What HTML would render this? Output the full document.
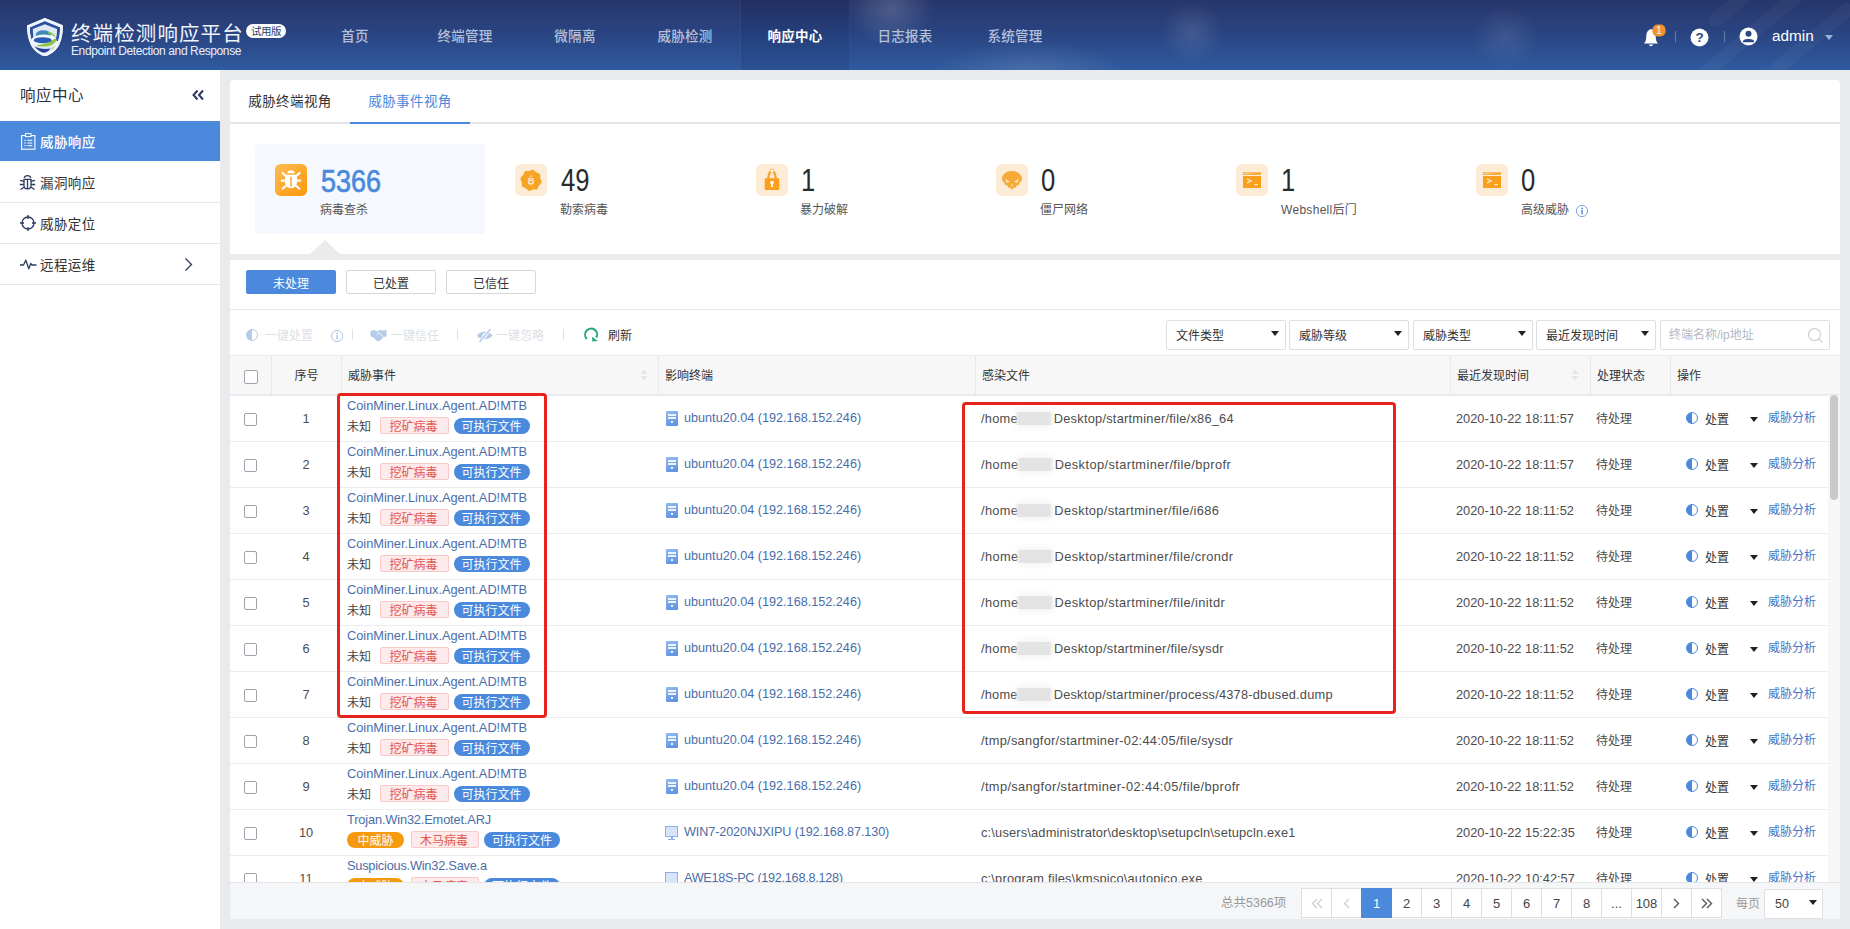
<!DOCTYPE html>
<html lang="zh-CN">
<head>
<meta charset="utf-8">
<title>终端检测响应平台</title>
<style>
*{box-sizing:border-box;margin:0;padding:0}
html,body{width:1850px;height:929px;overflow:hidden}
body{position:relative;background:#e8eaed;font-family:"Liberation Sans","Noto Sans CJK SC",sans-serif;font-size:12px;color:#333}
i{font-style:normal;display:inline-block}
.abs{position:absolute}
/* ---------- header ---------- */
#hd{position:absolute;left:0;top:0;width:1850px;height:70px;background:linear-gradient(180deg,#27366b 0%,#2a4583 50%,#2f5ba0 100%);overflow:hidden}
#hd .glow{position:absolute;border-radius:50%;background:radial-gradient(ellipse at center,rgba(255,255,255,.17),rgba(255,255,255,0) 68%)}
#hd .streak{position:absolute;height:14px;border-radius:7px;background:rgba(255,255,255,.035);transform-origin:left center;transform:rotate(-40deg)}
#logo{position:absolute;left:27.300px;top:17.800px;width:36px;height:38.500px}
#ttl{position:absolute;left:71px;top:18px;font-size:20.500px;line-height:28px;color:#f0f4fb;letter-spacing:1.100px;white-space:nowrap;font-family:"Noto Sans CJK SC",sans-serif;font-weight:400}
#sub{position:absolute;left:71px;top:44px;font-size:12px;line-height:14px;color:#e9eef8;white-space:nowrap;letter-spacing:-.39px}
#trial{position:absolute;left:246px;top:24px;width:40px;height:14px;border-radius:7px;background:#fff;color:#2c3e63;font-size:10.5px;line-height:14px;text-align:center;letter-spacing:-.5px;font-family:"Noto Sans CJK SC",sans-serif}
.nav{position:absolute;top:0;height:70px;width:110px;text-align:center;line-height:71px;font-size:13.500px;color:#b5c0d8;font-weight:500;font-family:"Noto Sans CJK SC",sans-serif;letter-spacing:.3px}
.nav.on{background:linear-gradient(180deg,#222f60 0%,#25407c 50%,#2a5194 100%);color:#fff;font-weight:700;border-left:1px solid rgba(255,255,255,.06);border-right:1px solid rgba(255,255,255,.06)}
.vsep{position:absolute;top:31px;width:1px;height:11px;background:rgba(255,255,255,.28)}
#admin{position:absolute;left:1772px;top:26px;font-size:15.300px;line-height:20px;color:#fff}
#acar{position:absolute;left:1825px;top:35px;width:0;height:0;border-left:4px solid transparent;border-right:4px solid transparent;border-top:5px solid #9fb3d9}
/* ---------- sidebar ---------- */
#sb{position:absolute;left:0;top:70px;width:220px;height:859px;background:#fff}
#sbt{position:absolute;left:20px;top:12px;letter-spacing:.5px;font-size:15.500px;line-height:24px;color:#2b3140;font-family:"Noto Sans CJK SC",sans-serif;font-weight:400}
.mi{position:absolute;left:0;width:220px;height:41px;border-bottom:1px solid #e3e6ea;font-size:13.500px;line-height:41px;color:#333;padding-left:40px;font-family:"Noto Sans CJK SC",sans-serif;letter-spacing:.4px}
.mi.on{background:#4a89dc;color:#fff;border-bottom:none;height:40px;font-weight:500}
.mi svg{position:absolute;left:20px;top:13px}
/* ---------- panel 1 ---------- */
#p1{position:absolute;left:230px;top:80px;width:1610px;height:174px;background:#fff;border-radius:3px 3px 0 0}
#tabs{position:absolute;left:0;top:0;width:1610px;height:44px;border-bottom:2px solid #e3e4e6}
.tab{position:absolute;top:0;height:44px;line-height:40px;font-size:13.500px;color:#333;font-family:"Noto Sans CJK SC",sans-serif;letter-spacing:.4px;text-align:center}
.tab.on{color:#4a89dc;border-bottom:2px solid #4a89dc}
#card{position:absolute;left:25px;top:64px;width:230px;height:90px;background:#f5f8fd;border-radius:4px}
.st-ic{position:absolute;width:32px;height:32px;border-radius:5px;top:84px}
.st-n{position:absolute;top:83px;font-size:32px;line-height:34px;color:#2a2a2a;transform-origin:left center;transform:scaleX(.8);white-space:nowrap}
.st-l{position:absolute;top:122px;font-size:12px;line-height:16px;color:#555;white-space:nowrap;font-family:"Liberation Sans","Noto Sans CJK SC",sans-serif}
#tri{position:absolute;left:80px;top:160px;width:0;height:0;border-left:15px solid transparent;border-right:15px solid transparent;border-bottom:14px solid #ebebeb}
#gap{position:absolute;left:230px;top:254px;width:1610px;height:6px;background:#ebebeb}
/* ---------- panel 2 ---------- */
#p2{position:absolute;left:230px;top:260px;width:1610px;height:659px;background:#fff;overflow:hidden}
.btn{position:absolute;top:10px;width:90px;height:24px;border:1px solid #d4d7dc;border-radius:2px;background:#fff;color:#333;font-size:12px;line-height:23px;text-align:center;font-family:"Noto Sans CJK SC",sans-serif}
.btn.on{background:#4a89dc;border-color:#4a89dc;color:#fff}
#bline{position:absolute;left:0;top:49px;width:1610px;height:1px;background:#e3e5e8}
.tb{position:absolute;top:66px;font-size:12px;line-height:18px;color:#dcdfe6;white-space:nowrap;font-family:"Noto Sans CJK SC",sans-serif}
.tsep{position:absolute;top:69px;width:1px;height:11px;background:#dddfe3}
.sel{position:absolute;top:60px;width:120px;height:30px;border:1px solid #dcdfe3;border-radius:2px;background:#fff;font-size:12px;line-height:28px;padding-left:9px;color:#333;font-family:"Noto Sans CJK SC",sans-serif}
.sel:after{content:"";position:absolute;right:6px;top:10px;border-left:4px solid transparent;border-right:4px solid transparent;border-top:5px solid #222}
#srch{position:absolute;left:1430px;top:60px;width:170px;height:30px;border:1px solid #dcdfe3;border-radius:2px;background:#fff;font-size:12px;line-height:28px;padding-left:8px;color:#b4b8bf;font-family:"Liberation Sans","Noto Sans CJK SC",sans-serif}
/* table */
#th{position:absolute;left:0;top:95px;width:1610px;height:40px;background:#f7f7f8;border-top:1px solid #e8eaed;border-bottom:1px solid #e8eaed}
#th div{position:absolute;top:0;height:38px;line-height:38px;font-size:12px;color:#333;border-left:1px solid #e6e8eb;padding-left:6px;font-family:"Noto Sans CJK SC",sans-serif}
#tbody{position:absolute;left:0;top:135px;width:1598px;height:487px;overflow:hidden}
.tr{position:relative;width:1598px;height:46px;background:linear-gradient(#ebecee,#ebecee) no-repeat 0 0/100% 1px}
.c{position:absolute;top:0;height:46px;line-height:47px;font-size:12.8px;white-space:nowrap;color:#4c4c4c}
.c0{left:0;width:41px}
.c1{left:41px;width:70px;text-align:center}
.c2{left:117px}
.c3{left:435px;color:#4a6ea9;font-size:12.650px}
.c4{left:751px;letter-spacing:.24px}
.c5{left:1226px;letter-spacing:0}
.c6{left:1366px;font-family:"Noto Sans CJK SC",sans-serif;font-size:12px;line-height:45px}
.c7{left:1440px;width:158px;font-family:"Noto Sans CJK SC",sans-serif;font-size:12px}
.cb{position:absolute;left:14px;top:18px;width:13px;height:13px;border:1px solid #9ea3ab;border-radius:2px;background:#fff}
.nm{position:absolute;left:0;top:2px;line-height:17px;color:#4a6ea9;font-size:12.8px;letter-spacing:-.02px}
.tg{position:absolute;left:0;top:22px;height:18px;line-height:17px;font-size:12px;font-family:"Noto Sans CJK SC",sans-serif}
.tg span{display:inline-block;vertical-align:top;height:17px}
.unk{width:33px;color:#444}
.mid{width:57px;margin-right:6.500px;border-radius:9px;background:#f59a0c;color:#fff;text-align:center;height:16px!important;line-height:16px;margin-top:1px}
.pk{width:68.500px;border:1px solid #f9c9c9;background:#fdeaea;color:#e25850;text-align:left;padding-left:8.500px;line-height:15px;border-radius:2px;margin-right:5px}
.bl{width:76px;border-radius:9px;background:#4a89dc;color:#fff;text-align:center;height:16px!important;line-height:16px;margin-top:1px}
.hn{position:absolute;left:19px;top:0}
.blur{width:40px;height:13px;vertical-align:middle;margin:0 0 0 -4px;border-radius:4px;background:linear-gradient(90deg,rgba(227,227,227,0) 0,#e3e3e3 5px,#e3e3e3 35px,rgba(227,227,227,0) 40px);position:relative;top:-1px;box-shadow:0 -5px 6px -3px rgba(240,240,240,.9),0 5px 6px -3px rgba(240,240,240,.9)}
.half{position:absolute;left:16px;top:17px;width:12px;height:12px;border-radius:50%;border:1px solid #4a89dc;background:linear-gradient(90deg,#4a89dc 50%,#fff 50%)}
.cz{position:absolute;left:35px;top:0;color:#333}
.car{position:absolute;left:80px;top:22px;width:0;height:0;border-left:4px solid transparent;border-right:4px solid transparent;border-top:5px solid #222}
.fx{position:absolute;left:98px;top:-2px;color:#3f78c9}
.ic-linux,.ic-win{position:absolute;left:1px;top:16px;width:12px;height:15px}
.ic-linux{background:linear-gradient(160deg,#93baf0 0%,#5a8fe0 100%);border-radius:1px}
.ic-linux:before{content:"";position:absolute;left:2px;top:3px;width:8px;height:1.500px;background:#eef4fd;box-shadow:0 3px 0 #eef4fd}
.ic-linux:after{content:"";position:absolute;left:5px;top:10px;width:2px;height:1.500px;background:#eef4fd}
.ic-win{left:0;height:11px;top:17px;width:13px;border:1px solid #8eafe3;border-bottom-width:1.500px;background:#d6e5f9}
.ic-win:before{content:"";position:absolute;left:5px;top:9.500px;width:1.500px;height:2px;background:#8eafe3}
.ic-win:after{content:"";position:absolute;left:2px;top:11.500px;width:7px;height:1px;background:#8eafe3}
/* annotation boxes */
.red{position:absolute;border:3px solid #e8231c;border-radius:4px;pointer-events:none}
/* scrollbar */
#sbar{position:absolute;left:1598px;top:135px;width:12px;height:487px;background:#f7f7f7}
#sbar i{position:absolute;left:2px;top:0;width:8px;height:105px;border-radius:4px;background:#c9c9c9}
/* pager */
#pg{position:absolute;left:0;top:622px;width:1610px;height:37px;background:#f5f6f8;border-top:1px solid #e3e5e8}
.pn{position:absolute;top:5px;width:31px;height:30px;border:1px solid #dcdfe3;background:#fff;text-align:center;line-height:29px;font-size:13px;color:#444}
.pn.on{background:#4a89dc;border-color:#4a89dc;color:#fff;z-index:2}
</style>
</head>
<body>
<!-- ================= HEADER ================= -->
<div id="hd">
  <div class="glow" style="left:846px;top:-32px;width:90px;height:80px"></div><div class="glow" style="left:1160px;top:0px;width:64px;height:64px;opacity:.7"></div><div class="glow" style="left:1470px;top:4px;width:70px;height:66px;opacity:.55"></div><div class="glow" style="left:930px;top:40px;width:200px;height:60px;opacity:.7"></div>
  <div class="streak" style="left:1710px;top:18px;width:80px"></div>
  <div class="streak" style="left:1700px;top:70px;width:150px"></div>
  <div class="streak" style="left:1760px;top:76px;width:120px"></div>
  <svg id="logo" viewBox="0 0 36 38.500">
    <path d="M17.900 0 L35.800 7.300 C36 14 35 20 32.500 26 C29.500 32.500 24 36.500 17.900 38.400 C12 36.500 6.500 32.500 3.500 26 C1 20 0 14 .100 7.500 Z" fill="#eaf2fc"/>
    <path d="M17.900 3 L33 9.200 C33.200 14.500 32.500 19 31 23 L5 23 C3.300 19 2.700 14.500 2.900 9.300 Z" fill="#2b50a2"/>
    <path d="M17.900 6.200 L30 11 C30.200 16 29.500 20 28 24 C26 30 22.500 33.500 17.900 35.600 C13.500 33.500 10 30 8 24 C6.300 20 5.800 16 5.900 11 Z" fill="#dfeaf7"/>
    <ellipse cx="16.300" cy="16.700" rx="7.500" ry="4.400" fill="#3f8ab6"/>
    <path d="M22 13.500 C25.500 14.500 28 17 28.800 20 C26.500 17.500 24 16.200 21 15.600 Z" fill="#8cc63f"/>
    <ellipse cx="16.800" cy="22.400" rx="12.600" ry="6" fill="#f3f8fe"/>
    <path d="M29 20.500 C30.500 25 24 28.600 16 28.600 C13 28.600 11 28.200 9.500 27.500 C12 26.500 20 26.500 24.500 22.800 C26 21.600 27.500 20.500 29 20.500 Z" fill="#8cc63f"/>
    <ellipse cx="15.700" cy="22.200" rx="9" ry="3" fill="#2a5bb4"/>
    <path d="M7 28 C11 31 19 31.300 23.500 30.500 C22 33 19.500 34.500 17 34.800 C12.500 34 8.500 31.500 7 28 Z" fill="#22409b"/>
    <path d="M24.500 30 C26 29.500 27.500 28.500 28.300 27.500 C27.800 30 26 32 24 33 Z" fill="#b9dc8a"/>
    <path d="M17.900 0 L35.800 7.300 C36 14 35 20 32.500 26 C29.500 32.500 24 36.500 17.900 38.400 C12 36.500 6.500 32.500 3.500 26 C1 20 0 14 .100 7.500 Z M17.900 3 L2.900 9.300 C2.700 15 3.500 20 5.800 25.500 C8.500 31 13 34.200 17.900 35.800 C23 34.200 27.500 31 30.200 25.500 C32.500 20 33.200 15 33 9.200 Z" fill="#eef4fc" fill-rule="evenodd"/>
  </svg>
  <div id="ttl">终端检测响应平台</div>
  <div id="sub">Endpoint Detection and Response</div>
  <div id="trial">试用版</div>
  <div class="nav" style="left:300px">首页</div>
  <div class="nav" style="left:410px">终端管理</div>
  <div class="nav" style="left:520px">微隔离</div>
  <div class="nav" style="left:630px">威胁检测</div>
  <div class="nav on" style="left:740px">响应中心</div>
  <div class="nav" style="left:850px">日志报表</div>
  <div class="nav" style="left:960px">系统管理</div>
  <!-- bell -->
  <svg class="abs" style="left:1640px;top:23px" width="28" height="28" viewBox="0 0 28 28">
    <path d="M11 6 C7.300 7 6.300 10.500 6.300 13.500 C6.300 17.500 5.300 19 3.800 20.600 L18.200 20.600 C16.700 19 15.700 17.500 15.700 13.500 C15.700 10.500 14.700 7 11 6 Z" fill="#fff"/>
    <path d="M8.800 21.600 A2.300 2.300 0 0 0 13.200 21.600 Z" fill="#fff"/>
    <rect x="12.500" y="1.500" width="13" height="12" rx="5" fill="#f0932b"/>
    <text x="19" y="11.300" font-size="10.500" fill="#fff" text-anchor="middle" font-family="Liberation Sans, sans-serif">1</text>
  </svg>
  <div class="vsep" style="left:1675px"></div>
  <!-- help -->
  <svg class="abs" style="left:1690px;top:28px" width="19" height="19" viewBox="0 0 19 19">
    <circle cx="9.500" cy="9.500" r="9" fill="#fff"/>
    <text x="9.500" y="14.300" font-size="13.500" font-weight="700" fill="#2a4986" text-anchor="middle" font-family="Liberation Sans, sans-serif">?</text>
  </svg>
  <div class="vsep" style="left:1724px"></div>
  <!-- user -->
  <svg class="abs" style="left:1739px;top:27px" width="19" height="19" viewBox="0 0 19 19">
    <circle cx="9.500" cy="9.500" r="9" fill="#fff"/>
    <circle cx="9.500" cy="6.800" r="3" fill="#2a4986"/>
    <path d="M4 14.500 C4 11.300 15 11.300 15 14.500 L15 15.200 L4 15.200 Z" fill="#2a4986"/>
  </svg>
  <div id="admin">admin</div>
  <div id="acar"></div>
</div>

<!-- ================= SIDEBAR ================= -->
<div id="sb">
  <div id="sbt">响应中心</div>
  <svg class="abs" style="left:192px;top:19px" width="13" height="12" viewBox="0 0 13 12"><path d="M5.500 1.500 L1.500 6 L5.500 10.500 M11 1.500 L7 6 L11 10.500" fill="none" stroke="#2c3a5c" stroke-width="2"/></svg>
  <div class="mi on" style="top:51px">
    <svg style="left:21px;top:12px" width="15" height="17" viewBox="0 0 15 17"><rect x=".6" y="2.600" width="13.300" height="13.600" fill="none" stroke="#fff" stroke-width="1.100"/><rect x="4.500" y=".6" width="5.500" height="3" fill="#4a89dc" stroke="#fff" stroke-width="1"/><path d="M3.300 7.300H4.800M6.300 7.300H11.300M3.300 10H4.800M6.300 10H11.300M3.300 12.700H4.800M6.300 12.700H11.300" stroke="#fff" stroke-width="1"/></svg>威胁响应</div>
  <div class="mi" style="top:92px">
    <svg style="left:19px;top:12px" width="17" height="17" viewBox="0 0 17 17"><path d="M5.300 3.800 C5.800 .8 11.200 .8 11.700 3.800 M4.300 5.300 H12.700 M5 5.300 V11.500 C5 16 12 16 12 11.500 V5.300 M8.500 5.300 V14.800 M1 6.300 L4.800 7.300 M16 6.300 L12.200 7.300 M.8 10.500 H5 M12 10.500 H16.200 M1.500 15.500 L5.300 13 M15.500 15.500 L11.700 13" fill="none" stroke="#2c3a5c" stroke-width="1.300"/></svg>漏洞响应</div>
  <div class="mi" style="top:133px">
    <svg style="left:20px;top:12px" width="16" height="16" viewBox="0 0 16 16"><circle cx="8" cy="8" r="6" fill="none" stroke="#2c3a5c" stroke-width="1.300"/><path d="M8 0V4M8 12V16M0 8H4M12 8H16" stroke="#2c3a5c" stroke-width="1.300"/></svg>威胁定位</div>
  <div class="mi" style="top:174px">
    <svg style="left:20px;top:12px" width="17" height="16" viewBox="0 0 17 16"><path d="M0 9 H3.500 L5.800 4.200 L8.800 12.800 L10.800 7.500 L12 9 H16.500" fill="none" stroke="#2c3a5c" stroke-width="1.300" stroke-linejoin="round"/></svg>远程运维
    <svg style="left:184px;top:13px" width="9" height="15" viewBox="0 0 9 15"><path d="M1.500 1.500 L7.500 7.500 L1.500 13.500" fill="none" stroke="#2c3a5c" stroke-width="1.300"/></svg></div>
</div>

<!-- ================= PANEL 1 ================= -->
<div id="p1">
  <div id="tabs">
    <div class="tab" style="left:0;width:120px">威胁终端视角</div>
    <div class="tab on" style="left:120px;width:120px">威胁事件视角</div>
  </div>
  <div id="card"></div>
  <svg class="st-ic" style="left:45px" viewBox="0 0 32 32"><defs><linearGradient id="og" x1="0" y1="0" x2="1" y2="1"><stop offset="0" stop-color="#fdbb55"/><stop offset="1" stop-color="#ff970a"/></linearGradient></defs><rect width="32" height="32" rx="5.500" fill="url(#og)"/><g transform="translate(16 16.300) scale(1.120) translate(-16 -17)"><path d="M12.600 10.600 A3.500 3.500 0 0 1 19.400 10.600 Z" fill="#fff"/><path d="M10.700 12 H21.300 V19 C21.300 25.800 10.700 25.800 10.700 19 Z" fill="#fff"/><path d="M7.800 9.800 L11 13 M24.200 9.800 L21 13 M7 17.300 H10.700 M21.300 17.300 H25 M8 25 L11.500 21.800 M24 25 L20.500 21.800" stroke="#fff" stroke-width="1.900" fill="none"/><path d="M16 13.800 V22.800" stroke="#fca42a" stroke-width="1.300"/></g></svg>
  <div class="st-n" style="left:91px;color:#4a89dc;-webkit-text-stroke:.7px #4a89dc;font-size:31px;transform:scaleX(.87);top:85px">5366</div><div class="st-l" style="left:90px">病毒查杀</div>
  <svg class="st-ic" style="left:285px" viewBox="0 0 32 32"><rect width="32" height="32" rx="5.500" fill="#fdecd5"/><path d="M26.1 18.3 L23.4 21.3 L21.7 24.9 L17.7 25 L14 26.4 L11 23.7 L7.4 22 L7.3 18 L5.9 14.3 L8.6 11.3 L10.3 7.7 L14.3 7.6 L18 6.2 L21 8.9 L24.6 10.6 L24.7 14.6 Z" fill="#f7a325" stroke="#f7a325" stroke-width="1.200" stroke-linejoin="round"/><text x="16.200" y="19.900" font-size="9.500" font-weight="700" fill="#fdebd2" text-anchor="middle" font-family="Liberation Sans, sans-serif">B</text><path d="M15 11.500V13.200M16.800 11.500V13.200M15 19.700V21.400M16.800 19.700V21.400" stroke="#fdebd2" stroke-width=".9"/></svg>
  <div class="st-n" style="left:331px">49</div><div class="st-l" style="left:330px">勒索病毒</div>
  <svg class="st-ic" style="left:526px" viewBox="0 0 32 32"><rect width="32" height="32" rx="5.500" fill="#fdecd5"/><path d="M12.300 15 C12.300 11 13.800 8.500 14.600 7.600 M19.700 15 C19.700 11 18.200 8.500 17.400 7.600" stroke="#f8a62b" stroke-width="2.200" fill="none"/><path d="M14.800 6.200 L14.300 4.900 M16 6 V4.500 M17.200 6.200 L17.700 4.900" stroke="#f8a62b" stroke-width=".8"/><rect x="8.700" y="14.300" width="14.600" height="11.700" rx="1" fill="#fb9f1c"/><circle cx="16" cy="18.600" r="1.900" fill="#fff3e0"/><path d="M15.200 19.500 H16.800 L17.200 23 H14.800 Z" fill="#fff3e0"/></svg>
  <div class="st-n" style="left:571px">1</div><div class="st-l" style="left:570px">暴力破解</div>
  <svg class="st-ic" style="left:766px" viewBox="0 0 32 32"><rect width="32" height="32" rx="5.500" fill="#fdecd5"/><path d="M16 7 C21.500 7 26 10.500 26 14.500 C26 16.800 24.800 18 23.600 18.800 L22.600 21.500 L20.800 21 L20 23.800 L18 23.200 L16 26 L14 23.200 L12 23.800 L11.200 21 L9.400 21.500 L8.400 18.800 C7.200 18 6 16.800 6 14.500 C6 10.500 10.500 7 16 7 Z" fill="#f9a937"/><path d="M9 14.800 L14 17.800 L10.500 18.600 Z M23 14.800 L18 17.800 L21.500 18.600 Z M16 19.500 L17 22 H15 Z" fill="#fdecd5"/></svg>
  <div class="st-n" style="left:811px">0</div><div class="st-l" style="left:810px">僵尸网络</div>
  <svg class="st-ic" style="left:1006px" viewBox="0 0 32 32"><rect width="32" height="32" rx="5.500" fill="#fdecd5"/><rect x="7" y="8.300" width="18" height="2.600" fill="#f7a93a"/><rect x="7" y="12" width="18" height="12" fill="#fa9f1d"/><path d="M8 9.600H9.500M10.500 9.600H12M13 9.600H14.500" stroke="#fdecd5" stroke-width=".8"/><path d="M11 15 L15.300 17 L11 19" stroke="#fdecd5" stroke-width="1.200" fill="none"/><path d="M18.500 20.700 H22" stroke="#fdecd5" stroke-width="1.200"/></svg>
  <div class="st-n" style="left:1051px">1</div><div class="st-l" style="left:1051px;letter-spacing:.3px">Webshell后门</div>
  <svg class="st-ic" style="left:1246px" viewBox="0 0 32 32"><rect width="32" height="32" rx="5.500" fill="#fdecd5"/><rect x="7" y="8.300" width="18" height="2.600" fill="#f7a93a"/><rect x="7" y="12" width="18" height="12" fill="#fa9f1d"/><path d="M8 9.600H9.500M10.500 9.600H12M13 9.600H14.500" stroke="#fdecd5" stroke-width=".8"/><path d="M11 15 L15.300 17 L11 19" stroke="#fdecd5" stroke-width="1.200" fill="none"/><path d="M18.500 20.700 H22" stroke="#fdecd5" stroke-width="1.200"/></svg>
  <div class="st-n" style="left:1291px">0</div><div class="st-l" style="left:1291px">高级威胁</div>
  <svg class="abs" style="left:1345px;top:124px" width="14" height="14" viewBox="0 0 14 14"><circle cx="7" cy="7" r="5.600" fill="none" stroke="#7fa6dd" stroke-width="1"/><circle cx="7" cy="4.300" r=".9" fill="#4a7fc9"/><rect x="6.300" y="6" width="1.400" height="4.300" fill="#4a7fc9"/></svg>
  <div id="tri"></div>
</div>
<div id="gap"></div>

<!-- ================= PANEL 2 ================= -->
<div id="p2">
  <div class="btn on" style="left:16px">未处理</div>
  <div class="btn" style="left:116px">已处置</div>
  <div class="btn" style="left:216px">已信任</div>
  <div id="bline"></div>
  <i class="abs" style="left:16px;top:69px;width:12px;height:12px;border-radius:50%;border:1px solid #b5cbea;background:linear-gradient(90deg,#b5cbea 50%,#fff 50%)"></i>
  <div class="tb" style="left:35px">一键处置</div>
  <svg class="abs" style="left:100px;top:69px" width="14" height="14" viewBox="0 0 14 14"><circle cx="7" cy="7" r="5.600" fill="none" stroke="#a9c4ea" stroke-width="1"/><circle cx="7" cy="4.300" r=".9" fill="#a9c4ea"/><rect x="6.300" y="6" width="1.400" height="4.300" fill="#a9c4ea"/></svg>
  <div class="tsep" style="left:122px"></div>
  <svg class="abs" style="left:140px;top:69px" width="17" height="13" viewBox="0 0 17 13"><path d="M.5 2 L4 1 L7 2.500 L9.500 1 L13 1.500 L16.500 1 V7.500 L14 8 L9.500 12 C8.500 12.500 8 12.500 7 12 L3 8 L.5 7.500 Z" fill="#b5cbea"/><path d="M6.500 6 L9 3.500 L13.500 8" stroke="#fff" stroke-width=".9" fill="none"/></svg>
  <div class="tb" style="left:161px">一键信任</div>
  <div class="tsep" style="left:227px"></div>
  <svg class="abs" style="left:246px;top:68px" width="18" height="15" viewBox="0 0 18 15"><path d="M1 7.500 C4 2.500 13 2.500 16.500 7.500 C13 12.500 4 12.500 1 7.500 Z" fill="#b5cbea"/><circle cx="8.800" cy="7.500" r="2.300" fill="#fff"/><path d="M14.500 1 L3.500 14" stroke="#fff" stroke-width="3"/><path d="M14.500 1 L3.500 14" stroke="#b5cbea" stroke-width="1.400"/></svg>
  <div class="tb" style="left:266px">一键忽略</div>
  <div class="tsep" style="left:333px"></div>
  <svg class="abs" style="left:353px;top:67px" width="16" height="16" viewBox="0 0 16 16"><path d="M3.860 11.840 A6 6 0 1 1 13.300 10.600" fill="none" stroke="#22a877" stroke-width="2"/><path d="M8.900 9.800 L14.800 14.100 L9.400 14.600 Z" fill="#22a877"/></svg>
  <div class="tb" style="left:378px;color:#333">刷新</div>
  <div class="sel" style="left:936px">文件类型</div>
  <div class="sel" style="left:1059px">威胁等级</div>
  <div class="sel" style="left:1183px">威胁类型</div>
  <div class="sel" style="left:1306px">最近发现时间</div>
  <div id="srch">终端名称/ip地址<svg class="abs" style="left:146px;top:6px" width="17" height="17" viewBox="0 0 17 17"><circle cx="7.500" cy="7.500" r="6" fill="none" stroke="#c9cdd3" stroke-width="1.100"/><path d="M12 12 L15.500 15.500" stroke="#c9cdd3" stroke-width="1.100"/></svg></div>
  <div id="th">
    <div style="left:0;width:41px;border-left:none"><i class="cb" style="top:14px;width:14px;height:14px"></i></div>
    <div style="left:41px;width:70px;text-align:center;padding-left:0">序号</div>
    <div style="left:111px;width:317px">威胁事件<svg class="abs" style="left:298px;top:13px" width="8" height="12" viewBox="0 0 8 12"><path d="M4 .5 L7.500 5 H.5 Z M4 11.500 L7.500 7 H.5 Z" fill="#e3e5e9"/></svg></div>
    <div style="left:428px;width:317px">影响终端</div>
    <div style="left:745px;width:475px">感染文件</div>
    <div style="left:1220px;width:140px">最近发现时间<svg class="abs" style="left:120px;top:13px" width="8" height="12" viewBox="0 0 8 12"><path d="M4 .5 L7.500 5 H.5 Z M4 11.500 L7.500 7 H.5 Z" fill="#e3e5e9"/></svg></div>
    <div style="left:1360px;width:80px">处理状态</div>
    <div style="left:1440px;width:170px">操作</div>
  </div>
  <div id="tbody">
<div class="tr"><div class="c c0"><i class="cb"></i></div><div class="c c1">1</div><div class="c c2"><div class="nm">CoinMiner.Linux.Agent.AD!MTB</div><div class="tg"><span class="unk">未知</span><span class="pk">挖矿病毒</span><span class="bl">可执行文件</span></div></div><div class="c c3"><i class="ic-linux"></i><span class="hn">ubuntu20.04 (192.168.152.246)</span></div><div class="c c4">/home<i class="blur"></i>Desktop/startminer/file/x86_64</div><div class="c c5">2020-10-22 18:11:57</div><div class="c c6">待处理</div><div class="c c7"><i class="half"></i><span class="cz">处置</span><i class="car"></i><span class="fx">威胁分析</span></div></div>
<div class="tr"><div class="c c0"><i class="cb"></i></div><div class="c c1">2</div><div class="c c2"><div class="nm">CoinMiner.Linux.Agent.AD!MTB</div><div class="tg"><span class="unk">未知</span><span class="pk">挖矿病毒</span><span class="bl">可执行文件</span></div></div><div class="c c3"><i class="ic-linux"></i><span class="hn">ubuntu20.04 (192.168.152.246)</span></div><div class="c c4" style="letter-spacing:0.41px">/home<i class="blur"></i>Desktop/startminer/file/bprofr</div><div class="c c5">2020-10-22 18:11:57</div><div class="c c6">待处理</div><div class="c c7"><i class="half"></i><span class="cz">处置</span><i class="car"></i><span class="fx">威胁分析</span></div></div>
<div class="tr"><div class="c c0"><i class="cb"></i></div><div class="c c1">3</div><div class="c c2"><div class="nm">CoinMiner.Linux.Agent.AD!MTB</div><div class="tg"><span class="unk">未知</span><span class="pk">挖矿病毒</span><span class="bl">可执行文件</span></div></div><div class="c c3"><i class="ic-linux"></i><span class="hn">ubuntu20.04 (192.168.152.246)</span></div><div class="c c4" style="letter-spacing:0.35px">/home<i class="blur"></i>Desktop/startminer/file/i686</div><div class="c c5">2020-10-22 18:11:52</div><div class="c c6">待处理</div><div class="c c7"><i class="half"></i><span class="cz">处置</span><i class="car"></i><span class="fx">威胁分析</span></div></div>
<div class="tr"><div class="c c0"><i class="cb"></i></div><div class="c c1">4</div><div class="c c2"><div class="nm">CoinMiner.Linux.Agent.AD!MTB</div><div class="tg"><span class="unk">未知</span><span class="pk">挖矿病毒</span><span class="bl">可执行文件</span></div></div><div class="c c3"><i class="ic-linux"></i><span class="hn">ubuntu20.04 (192.168.152.246)</span></div><div class="c c4" style="letter-spacing:0.39px">/home<i class="blur"></i>Desktop/startminer/file/crondr</div><div class="c c5">2020-10-22 18:11:52</div><div class="c c6">待处理</div><div class="c c7"><i class="half"></i><span class="cz">处置</span><i class="car"></i><span class="fx">威胁分析</span></div></div>
<div class="tr"><div class="c c0"><i class="cb"></i></div><div class="c c1">5</div><div class="c c2"><div class="nm">CoinMiner.Linux.Agent.AD!MTB</div><div class="tg"><span class="unk">未知</span><span class="pk">挖矿病毒</span><span class="bl">可执行文件</span></div></div><div class="c c3"><i class="ic-linux"></i><span class="hn">ubuntu20.04 (192.168.152.246)</span></div><div class="c c4" style="letter-spacing:0.40px">/home<i class="blur"></i>Desktop/startminer/file/initdr</div><div class="c c5">2020-10-22 18:11:52</div><div class="c c6">待处理</div><div class="c c7"><i class="half"></i><span class="cz">处置</span><i class="car"></i><span class="fx">威胁分析</span></div></div>
<div class="tr"><div class="c c0"><i class="cb"></i></div><div class="c c1">6</div><div class="c c2"><div class="nm">CoinMiner.Linux.Agent.AD!MTB</div><div class="tg"><span class="unk">未知</span><span class="pk">挖矿病毒</span><span class="bl">可执行文件</span></div></div><div class="c c3"><i class="ic-linux"></i><span class="hn">ubuntu20.04 (192.168.152.246)</span></div><div class="c c4" style="letter-spacing:0.29px">/home<i class="blur"></i>Desktop/startminer/file/sysdr</div><div class="c c5">2020-10-22 18:11:52</div><div class="c c6">待处理</div><div class="c c7"><i class="half"></i><span class="cz">处置</span><i class="car"></i><span class="fx">威胁分析</span></div></div>
<div class="tr"><div class="c c0"><i class="cb"></i></div><div class="c c1">7</div><div class="c c2"><div class="nm">CoinMiner.Linux.Agent.AD!MTB</div><div class="tg"><span class="unk">未知</span><span class="pk">挖矿病毒</span><span class="bl">可执行文件</span></div></div><div class="c c3"><i class="ic-linux"></i><span class="hn">ubuntu20.04 (192.168.152.246)</span></div><div class="c c4" style="letter-spacing:0.22px">/home<i class="blur"></i>Desktop/startminer/process/4378-dbused.dump</div><div class="c c5">2020-10-22 18:11:52</div><div class="c c6">待处理</div><div class="c c7"><i class="half"></i><span class="cz">处置</span><i class="car"></i><span class="fx">威胁分析</span></div></div>
<div class="tr"><div class="c c0"><i class="cb"></i></div><div class="c c1">8</div><div class="c c2"><div class="nm">CoinMiner.Linux.Agent.AD!MTB</div><div class="tg"><span class="unk">未知</span><span class="pk">挖矿病毒</span><span class="bl">可执行文件</span></div></div><div class="c c3"><i class="ic-linux"></i><span class="hn">ubuntu20.04 (192.168.152.246)</span></div><div class="c c4" style="letter-spacing:0.29px">/tmp/sangfor/startminer-02:44:05/file/sysdr</div><div class="c c5">2020-10-22 18:11:52</div><div class="c c6">待处理</div><div class="c c7"><i class="half"></i><span class="cz">处置</span><i class="car"></i><span class="fx">威胁分析</span></div></div>
<div class="tr"><div class="c c0"><i class="cb"></i></div><div class="c c1">9</div><div class="c c2"><div class="nm">CoinMiner.Linux.Agent.AD!MTB</div><div class="tg"><span class="unk">未知</span><span class="pk">挖矿病毒</span><span class="bl">可执行文件</span></div></div><div class="c c3"><i class="ic-linux"></i><span class="hn">ubuntu20.04 (192.168.152.246)</span></div><div class="c c4" style="letter-spacing:0.38px">/tmp/sangfor/startminer-02:44:05/file/bprofr</div><div class="c c5">2020-10-22 18:11:52</div><div class="c c6">待处理</div><div class="c c7"><i class="half"></i><span class="cz">处置</span><i class="car"></i><span class="fx">威胁分析</span></div></div>
<div class="tr"><div class="c c0"><i class="cb"></i></div><div class="c c1">10</div><div class="c c2"><div class="nm" style="letter-spacing:-0.15px">Trojan.Win32.Emotet.ARJ</div><div class="tg"><span class="mid">中威胁</span><span class="pk">木马病毒</span><span class="bl">可执行文件</span></div></div><div class="c c3"><i class="ic-win"></i><span class="hn" style="letter-spacing:-0.11px">WIN7-2020NJXIPU (192.168.87.130)</span></div><div class="c c4" style="letter-spacing:0.19px">c:\users\administrator\desktop\setupcln\setupcln.exe1</div><div class="c c5">2020-10-22 15:22:35</div><div class="c c6">待处理</div><div class="c c7"><i class="half"></i><span class="cz">处置</span><i class="car"></i><span class="fx">威胁分析</span></div></div>
<div class="tr"><div class="c c0"><i class="cb"></i></div><div class="c c1">11</div><div class="c c2"><div class="nm" style="letter-spacing:-0.23px">Suspicious.Win32.Save.a</div><div class="tg"><span class="mid">中威胁</span><span class="pk">木马病毒</span><span class="bl">可执行文件</span></div></div><div class="c c3"><i class="ic-win"></i><span class="hn" style="letter-spacing:-0.27px">AWE18S-PC (192.168.8.128)</span></div><div class="c c4" style="letter-spacing:0.20px">c:\program files\kmspico\autopico.exe</div><div class="c c5">2020-10-22 10:42:57</div><div class="c c6">待处理</div><div class="c c7"><i class="half"></i><span class="cz">处置</span><i class="car"></i><span class="fx">威胁分析</span></div></div>
  </div>
  <div id="sbar"><i></i></div>
  <div id="pg">
  <div class="abs" style="left:991px;top:10px;font-size:12.5px;line-height:20px;color:#999;white-space:nowrap">总共5366项</div>
  <div class="pn" style="left:1071px"><svg style="vertical-align:middle;position:relative;top:-1px" width="12" height="11" viewBox="0 0 12 11"><path d="M6 1 L1.500 5.500 L6 10 M11 1 L6.500 5.500 L11 10" fill="none" stroke="#cdd0d6" stroke-width="1.400"/></svg></div>
  <div class="pn" style="left:1101px"><svg style="vertical-align:middle;position:relative;top:-1px" width="7" height="11" viewBox="0 0 7 11"><path d="M6 1 L1.500 5.500 L6 10" fill="none" stroke="#cdd0d6" stroke-width="1.400"/></svg></div>
  <div class="pn on" style="left:1131px">1</div>
  <div class="pn" style="left:1161px">2</div>
  <div class="pn" style="left:1191px">3</div>
  <div class="pn" style="left:1221px">4</div>
  <div class="pn" style="left:1251px">5</div>
  <div class="pn" style="left:1281px">6</div>
  <div class="pn" style="left:1311px">7</div>
  <div class="pn" style="left:1341px">8</div>
  <div class="pn" style="left:1371px">...</div>
  <div class="pn" style="left:1401px">108</div>
  <div class="pn" style="left:1431px"><svg style="vertical-align:middle;position:relative;top:-1px" width="7" height="11" viewBox="0 0 7 11"><path d="M1 1 L5.500 5.500 L1 10" fill="none" stroke="#555" stroke-width="1.400"/></svg></div>
  <div class="pn" style="left:1461px"><svg style="vertical-align:middle;position:relative;top:-1px" width="12" height="11" viewBox="0 0 12 11"><path d="M1 1 L5.500 5.500 L1 10 M6 1 L10.500 5.500 L6 10" fill="none" stroke="#555" stroke-width="1.400"/></svg></div>
  <div class="abs" style="left:1506px;top:10px;font-size:12px;line-height:20px;color:#999;white-space:nowrap;font-family:'Noto Sans CJK SC',sans-serif">每页</div>
  <div class="abs" style="left:1534px;top:6px;width:59px;height:30px;border:1px solid #dcdfe3;border-radius:2px;background:#fff;font-size:12.5px;line-height:28px;padding-left:10px;color:#444">50<i class="abs" style="left:44px;top:10px;width:0;height:0;border-left:4px solid transparent;border-right:4px solid transparent;border-top:5px solid #222"></i></div>
  </div>
  <div class="red" style="left:107px;top:133px;width:210px;height:325px"></div>
  <div class="red" style="left:732px;top:142px;width:434px;height:312px"></div>
</div>
</body>
</html>
